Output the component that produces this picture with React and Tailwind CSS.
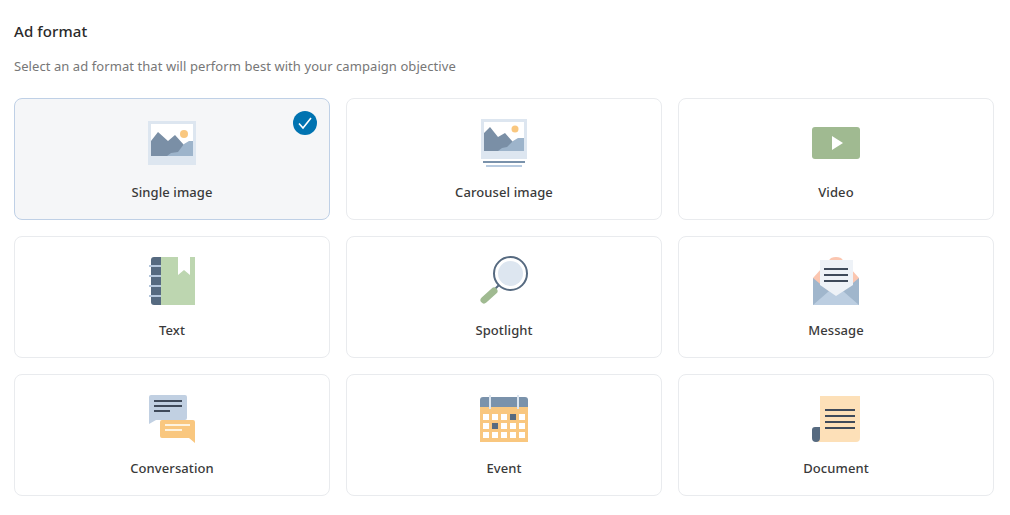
import React from 'react';

const slate = '#566a80';
const ink = '#3f4a5a';

function SingleImageIcon() {
  return (
    <>
      <rect x="8" y="7" width="48" height="44" fill="#dde6f0" />
      <rect x="11" y="10" width="42" height="32" fill="#fff" />
      <circle cx="44" cy="20" r="4" fill="#f9c77f" />
      <path d="M11 27 18 18 28 27 35 21 44 31V42H11Z" fill="#7a8fa6" />
      <path d="M27 42 31 39 38 38 44 30 49 27H53V42Z" fill="#9db4cb" />
    </>
  );
}

function CarouselIcon() {
  return (
    <>
      <rect x="9" y="5" width="46" height="40" fill="#dde6f0" />
      <rect x="12" y="8" width="40" height="29" fill="#fff" />
      <circle cx="43" cy="15" r="3.5" fill="#f9c77f" />
      <path d="M12 19 18 13 26 23 33 19 41 28V37H12Z" fill="#7a8fa6" />
      <path d="M26 37 30 34 35 33 41 27 46 24H52V37Z" fill="#9db4cb" />
      <rect x="11" y="47" width="42" height="2" fill="#7a92ab" />
      <rect x="14" y="51" width="36" height="2" fill="#b8cbe0" />
    </>
  );
}

function VideoIcon() {
  return (
    <>
      <rect x="8" y="13" width="48" height="32" rx="3" fill="#a0ba91" />
      <path d="M28 22 39 29 28 36Z" fill="#fff" />
    </>
  );
}

function TextIcon() {
  return (
    <>
      <path d="M21 5H55V53H21Z" fill="#bdd6b0" />
      <path d="M38 5H50V23L44 18 38 23Z" fill="#fff" />
      <path d="M21 5H14A3 3 0 0 0 11 8V50A3 3 0 0 0 14 53H21Z" fill={slate} />
      <rect x="9" y="13" width="12" height="2" fill="#b5c7dc" />
      <rect x="9" y="23" width="12" height="2" fill="#b5c7dc" />
      <rect x="9" y="33" width="12" height="2" fill="#b5c7dc" />
      <rect x="9" y="43" width="12" height="2" fill="#b5c7dc" />
    </>
  );
}

function SpotlightIcon() {
  return (
    <>
      <path d="M23 37 28 32" stroke={slate} strokeWidth="2" />
      <path d="M12 48 22 39" stroke="#a0ba91" strokeWidth="7" strokeLinecap="round" />
      <circle cx="38.5" cy="21.5" r="16.5" fill="#fff" stroke={slate} strokeWidth="2" />
      <circle cx="38.5" cy="21.5" r="12.5" fill="#dde6f0" />
    </>
  );
}

function MessageIcon() {
  return (
    <>
      <path d="M9 26 27 6Q32 4 37 6L55 26V40H9Z" fill="#fbc6b0" />
      <path d="M9 26 32 45 55 26V53H9Z" fill="#a0b6cc" />
      <path d="M9 53 32 33 55 53Z" fill="#bccee1" />
      <path d="M16 8H49V33L32 44 16 33Z" fill="#eef2f7" />
      <rect x="20" y="16" width="24" height="2" fill={ink} />
      <rect x="20" y="22" width="24" height="2" fill={ink} />
      <rect x="20" y="28" width="24" height="2" fill={ink} />
    </>
  );
}

function ConversationIcon() {
  return (
    <>
      <path d="M11 5H45A2 2 0 0 1 47 7V28A2 2 0 0 1 45 30H16L9 34V7A2 2 0 0 1 11 5Z" fill="#c1d0e2" />
      <rect x="14" y="10" width="28" height="2" fill={ink} />
      <rect x="14" y="15" width="28" height="2" fill={ink} />
      <rect x="14" y="20" width="16" height="2" fill={ink} />
      <path d="M22 30H53A2 2 0 0 1 55 32V53L49 48H22A2 2 0 0 1 20 46V32A2 2 0 0 1 22 30Z" fill="#f9c77f" />
      <rect x="25" y="34" width="25" height="2" fill="#fdf3e0" />
      <rect x="25" y="39" width="17" height="2" fill="#fdf3e0" />
    </>
  );
}

function EventIcon() {
  const cols = [11, 20, 29, 38, 47];
  const rows = [24, 33, 42];
  return (
    <>
      <rect x="8" y="17" width="48" height="35" fill="#f9c77f" />
      <path d="M8 17V10A3 3 0 0 1 11 7H53A3 3 0 0 1 56 10V17Z" fill="#7a92ab" />
      <rect x="17" y="5" width="2" height="14" fill="#dde6f0" />
      <rect x="45" y="5" width="2" height="14" fill="#dde6f0" />
      {rows.map((y, r) =>
        cols.map((x, c) => {
          const dark = (r === 0 && c === 3) || (r === 1 && c === 1);
          return <rect key={`${r}-${c}`} x={x} y={y} width="6" height="6" fill={dark ? slate : '#fff'} />;
        })
      )}
    </>
  );
}

function DocumentIcon() {
  return (
    <>
      <path d="M16 6H56V48A4 4 0 0 1 52 52H12L16 46Z" fill="#fde0b8" />
      <rect x="21" y="19" width="30" height="2" fill={ink} />
      <rect x="21" y="25" width="30" height="2" fill={ink} />
      <rect x="21" y="31" width="30" height="2" fill={ink} />
      <rect x="21" y="37" width="30" height="2" fill={ink} />
      <path d="M16 37H11A3 3 0 0 0 8 40V48A4 4 0 0 0 16 48Z" fill={slate} />
    </>
  );
}

const formats = [
  { label: 'Single image', Icon: SingleImageIcon, selected: true },
  { label: 'Carousel image', Icon: CarouselIcon },
  { label: 'Video', Icon: VideoIcon },
  { label: 'Text', Icon: TextIcon },
  { label: 'Spotlight', Icon: SpotlightIcon },
  { label: 'Message', Icon: MessageIcon },
  { label: 'Conversation', Icon: ConversationIcon },
  { label: 'Event', Icon: EventIcon },
  { label: 'Document', Icon: DocumentIcon },
];

function FormatCard({ label, Icon, selected }) {
  return (
    <div
      className={`relative flex h-[122px] flex-col items-center rounded-lg border pt-[15px] ${
        selected ? 'border-[#bfd0e6] bg-[#f5f6f8]' : 'border-[#e9ebee] bg-white'
      }`}
    >
      <svg width="64" height="56" viewBox="0 0 64 56" className="block">
        <Icon />
      </svg>
      <span className="mt-[13px] text-[13px] leading-[18px] font-medium tracking-[0.1px] text-[#3a3a3a]">{label}</span>
      {selected && (
        <svg width="24" height="24" viewBox="0 0 24 24" className="absolute top-[12px] right-[12px]">
          <circle cx="12" cy="12" r="12" fill="#0073b1" />
          <path d="M6 12.5 10 17 18 7" fill="none" stroke="#fff" strokeWidth="1.6" />
        </svg>
      )}
    </div>
  );
}

export default function App() {
  return (
    <div className="h-[515px] w-[1010px] bg-white px-[14px] pt-[20px] font-['Noto_Sans',sans-serif]">
      <h2 className="text-[15px] leading-[22px] font-medium tracking-[0.1px] text-[#2a2a2a]">Ad format</h2>
      <p className="mt-[15px] text-[13px] leading-[18px] tracking-[0.07px] text-[#777]">
        Select an ad format that will perform best with your campaign objective
      </p>
      <div className="mt-[23px] grid w-[980px] grid-cols-3 gap-4">
        {formats.map((f) => (
          <FormatCard key={f.label} {...f} />
        ))}
      </div>
    </div>
  );
}
